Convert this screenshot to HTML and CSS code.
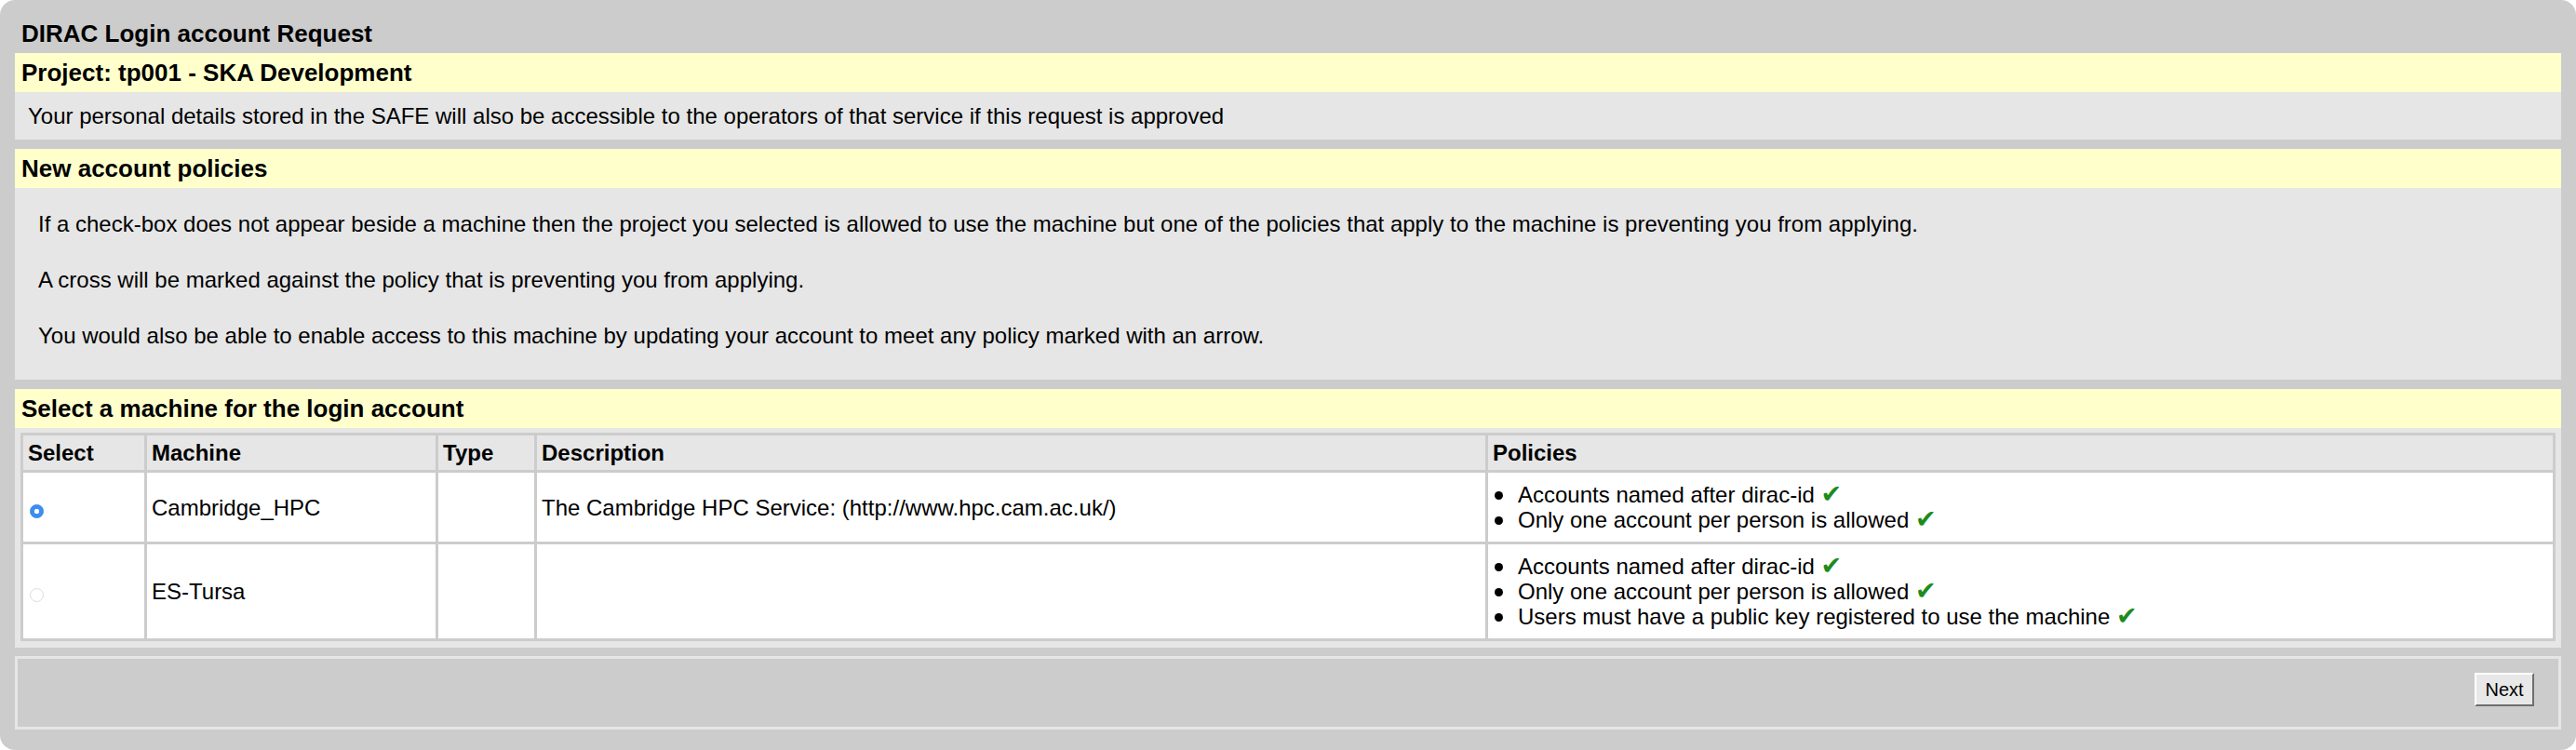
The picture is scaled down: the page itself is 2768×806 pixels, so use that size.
FILE: index.html
```html
<!DOCTYPE html>
<html lang="en">
<head>
<meta charset="utf-8">
<title>DIRAC Login account Request</title>
<link rel="stylesheet" href="styles.css">
</head>
<body>
<div class="panel">
  <h1 class="panel-title">DIRAC Login account Request</h1>

  <section class="box">
    <h2 class="box-head">Project: tp001 - SKA Development</h2>
    <div class="box-body notice">Your personal details stored in the SAFE will also be accessible to the operators of that service if this request is approved</div>
  </section>

  <section class="box">
    <h2 class="box-head">New account policies</h2>
    <div class="box-body info">
      <p>If a check-box does not appear beside a machine then the project you selected is allowed to use the machine but one of the policies that apply to the machine is preventing you from applying.<br><br>A cross will be marked against the policy that is preventing you from applying.<br><br>You would also be able to enable access to this machine by updating your account to meet any policy marked with an arrow.</p>
    </div>
  </section>

  <section class="box">
    <h2 class="box-head">Select a machine for the login account</h2>
    <div class="box-body table-wrap">
      <table class="machines">
        <thead>
          <tr>
            <th class="c-select">Select</th>
            <th class="c-machine">Machine</th>
            <th class="c-type">Type</th>
            <th class="c-desc">Description</th>
            <th class="c-pol">Policies</th>
          </tr>
        </thead>
        <tbody>
          <tr>
            <td><input type="radio" name="machine" class="radio" checked></td>
            <td>Cambridge_HPC</td>
            <td></td>
            <td>The Cambridge HPC Service: (http://www.hpc.cam.ac.uk/)</td>
            <td>
              <ul class="policies">
                <li>Accounts named after dirac-id <span class="ok">✔</span></li>
                <li>Only one account per person is allowed <span class="ok">✔</span></li>
              </ul>
            </td>
          </tr>
          <tr>
            <td><input type="radio" name="machine" class="radio" disabled></td>
            <td>ES-Tursa</td>
            <td></td>
            <td></td>
            <td>
              <ul class="policies">
                <li>Accounts named after dirac-id <span class="ok">✔</span></li>
                <li>Only one account per person is allowed <span class="ok">✔</span></li>
                <li>Users must have a public key registered to use the machine <span class="ok">✔</span></li>
              </ul>
            </td>
          </tr>
        </tbody>
      </table>
    </div>
  </section>

  <div class="footer">
    <button type="button" class="btn">Next</button>
  </div>
</div>
</body>
</html>
```

FILE: styles.css
```css
* { box-sizing: border-box; }

html, body {
  margin: 0;
  padding: 0;
  background: #ffffff;
}

body {
  font-family: "Liberation Sans", Arial, Helvetica, sans-serif;
  color: #000000;
  font-size: 24px;
}

.panel {
  background: #cccccc;
  border-radius: 16px;
  padding: 0 16px 22px 16px;
}

.panel-title {
  margin: 0;
  font-size: 26px;
  font-weight: bold;
  line-height: 30px;
  padding: 21px 7px 6px 7px;
}

.box + .box {
  margin-top: 10px;
}

.box-head {
  margin: 0;
  background: #ffffcc;
  font-size: 26px;
  font-weight: bold;
  line-height: 30px;
  padding: 6px 7px;
}

.box-body {
  background: #e6e6e6;
}

.notice {
  padding: 12px 14px;
  line-height: 27px;
}

.info {
  padding: 0 25px 8px 25px;
  overflow: hidden;
}

.info p {
  margin: 24px 0;
  line-height: 30px;
}

.table-wrap {
  padding: 5px 6px 7px 6px;
}

.machines {
  width: 100%;
  table-layout: fixed;
  border-collapse: separate;
  border-spacing: 3px;
  background: #cccccc;
}

.machines th,
.machines td {
  text-align: left;
  line-height: 27px;
  font-size: 24px;
}

.machines th {
  background: #e6e6e6;
  font-weight: bold;
  padding: 5px 5px;
}

.machines td {
  background: #ffffff;
  padding: 10px 5px;
  vertical-align: middle;
}

.c-select { width: 130px; }
.c-machine { width: 310px; }
.c-type { width: 103px; }
.c-desc { width: 1019px; }

.radio {
  -webkit-appearance: none;
  appearance: none;
  width: 15px;
  height: 15px;
  margin: 0 0 0 2px;
  border-radius: 50%;
  vertical-align: -3px;
  display: inline-block;
}

.radio:checked {
  background: radial-gradient(circle, #ffffff 0 2.5px, #3b8ff0 3px);
  border: 1px solid #3583e6;
}

.radio:disabled {
  background: #ffffff;
  border: 1px solid #dcdcdc;
}

.policies {
  list-style: none;
  margin: 0;
  padding: 0;
}

.policies li {
  line-height: 27px;
  height: 27px;
}

.policies li::before {
  content: "";
  display: inline-block;
  width: 9px;
  height: 9px;
  border-radius: 50%;
  background: #000000;
  margin: 0 16px 0 2px;
  vertical-align: 3px;
}

.ok {
  font-family: "DejaVu Sans", sans-serif;
  color: #1c8c1c;
  font-size: 27px;
  line-height: 0;
}

.footer {
  margin-top: 9px;
  border: 3px solid #e6e6e6;
  background: #cccccc;
  display: flex;
  justify-content: flex-end;
  align-items: flex-start;
  padding: 15px 26px 22px 0;
}

.btn {
  width: 64px;
  height: 36px;
  font-family: "Liberation Sans", Arial, Helvetica, sans-serif;
  font-size: 20px;
  color: #000000;
  background: #e8e8e8;
  border-style: solid;
  border-width: 2px;
  border-color: #ffffff #6e6e6e #6e6e6e #ffffff;
  padding: 0;
  cursor: pointer;
}
```
